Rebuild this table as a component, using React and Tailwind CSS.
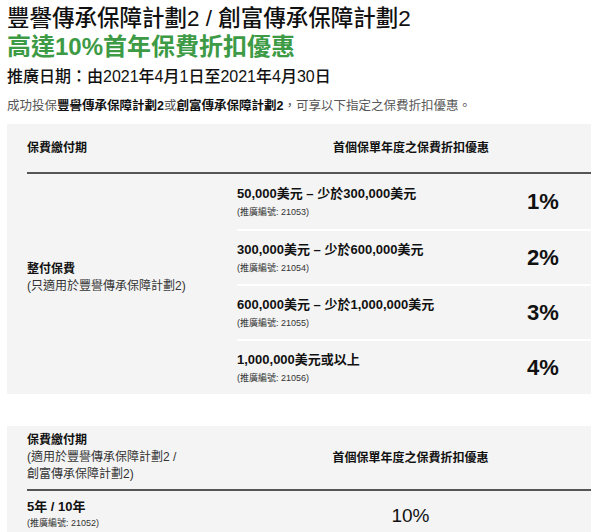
import React from "react";

const tiers = [
  { range: "50,000美元 – 少於300,000美元", code: "21053", pct: "1%" },
  { range: "300,000美元 – 少於600,000美元", code: "21054", pct: "2%" },
  { range: "600,000美元 – 少於1,000,000美元", code: "21055", pct: "3%" },
  { range: "1,000,000美元或以上", code: "21056", pct: "4%" },
];

const font = {
  fontFamily: '"Liberation Sans", "Noto Sans CJK TC", Arial, sans-serif',
};

const App = () => {
  return (
    <div className="min-h-screen bg-white text-[#111] overflow-hidden" style={font}>
      <div className="pl-[7px] pt-[5px]">
        <h1 className="text-[22.5px] leading-[28px] font-medium text-[#111]">
          豐譽傳承保障計劃2 / 創富傳承保障計劃2
        </h1>
        <h2 className="text-[24px] leading-[28px] font-bold text-[#3d9a45]">
          高達10%首年保費折扣優惠
        </h2>
        <p className="mt-[5px] text-[16px] leading-[22px] font-medium">
          推廣日期：由2021年4月1日至2021年4月30日
        </p>
        <p className="mt-[10px] text-[12.5px] leading-[16px] text-[#555]">
          成功投保<b className="text-[#111]">豐譽傳承保障計劃2</b>或
          <b className="text-[#111]">創富傳承保障計劃2</b>，可享以下指定之保費折扣優惠。
        </p>
      </div>

      {/* table 1 */}
      <div className="ml-[7px] mt-[10px] bg-[#f4f4f4] pl-[20px]">
        <div className="grid grid-cols-[210px_1fr] h-[50px] items-center border-b-2 border-[#555]">
          <div className="text-[12px] font-bold">保費繳付期</div>
          <div className="text-[12px] font-bold text-center pr-[6px]">
            首個保單年度之保費折扣優惠
          </div>
        </div>
        <div className="grid grid-cols-[210px_1fr]">
          <div className="flex flex-col justify-center pb-[12px]">
            <div className="text-[12px] leading-[17px] font-bold">整付保費</div>
            <div className="text-[12px] leading-[17px] text-[#333]">
              (只適用於豐譽傳承保障計劃2)
            </div>
          </div>
          <div>
            {tiers.map((t, i) => (
              <div
                key={t.code}
                className={`flex items-center h-[55px] ${i > 0 ? "border-t-2 border-white" : ""}`}
              >
                <div className="flex-1 flex flex-col gap-[2px]">
                  <div className="text-[13px] leading-[18px] font-bold">{t.range}</div>
                  <div className="text-[9px] leading-[14px] text-[#333]">
                    (推廣編號: {t.code})
                  </div>
                </div>
                <div className="w-[96px] text-center text-[22px] font-bold">{t.pct}</div>
              </div>
            ))}
          </div>
        </div>
      </div>

      {/* table 2 */}
      <div className="ml-[7px] mt-[32px] bg-[#f4f4f4] pl-[20px] pb-[20px]">
        <div className="grid grid-cols-[203px_1fr] items-center py-[6px] border-b-2 border-[#555]">
          <div className="text-[12px] leading-[17px] text-[#333]">
            <div className="font-bold text-[#111]">保費繳付期</div>
            <div>(適用於豐譽傳承保障計劃2 /</div>
            <div>創富傳承保障計劃2)</div>
          </div>
          <div className="text-[12px] font-bold text-center">首個保單年度之保費折扣優惠</div>
        </div>
        <div className="grid grid-cols-[203px_1fr] h-[50px]">
          <div className="pt-[7px]">
            <div className="text-[13px] leading-[18px] font-bold">5年 / 10年</div>
            <div className="text-[9px] leading-[14px] text-[#333]">(推廣編號: 21052)</div>
          </div>
          <div className="flex items-center justify-center text-[19px] font-medium">10%</div>
        </div>
      </div>
    </div>
  );
};

export default App;
